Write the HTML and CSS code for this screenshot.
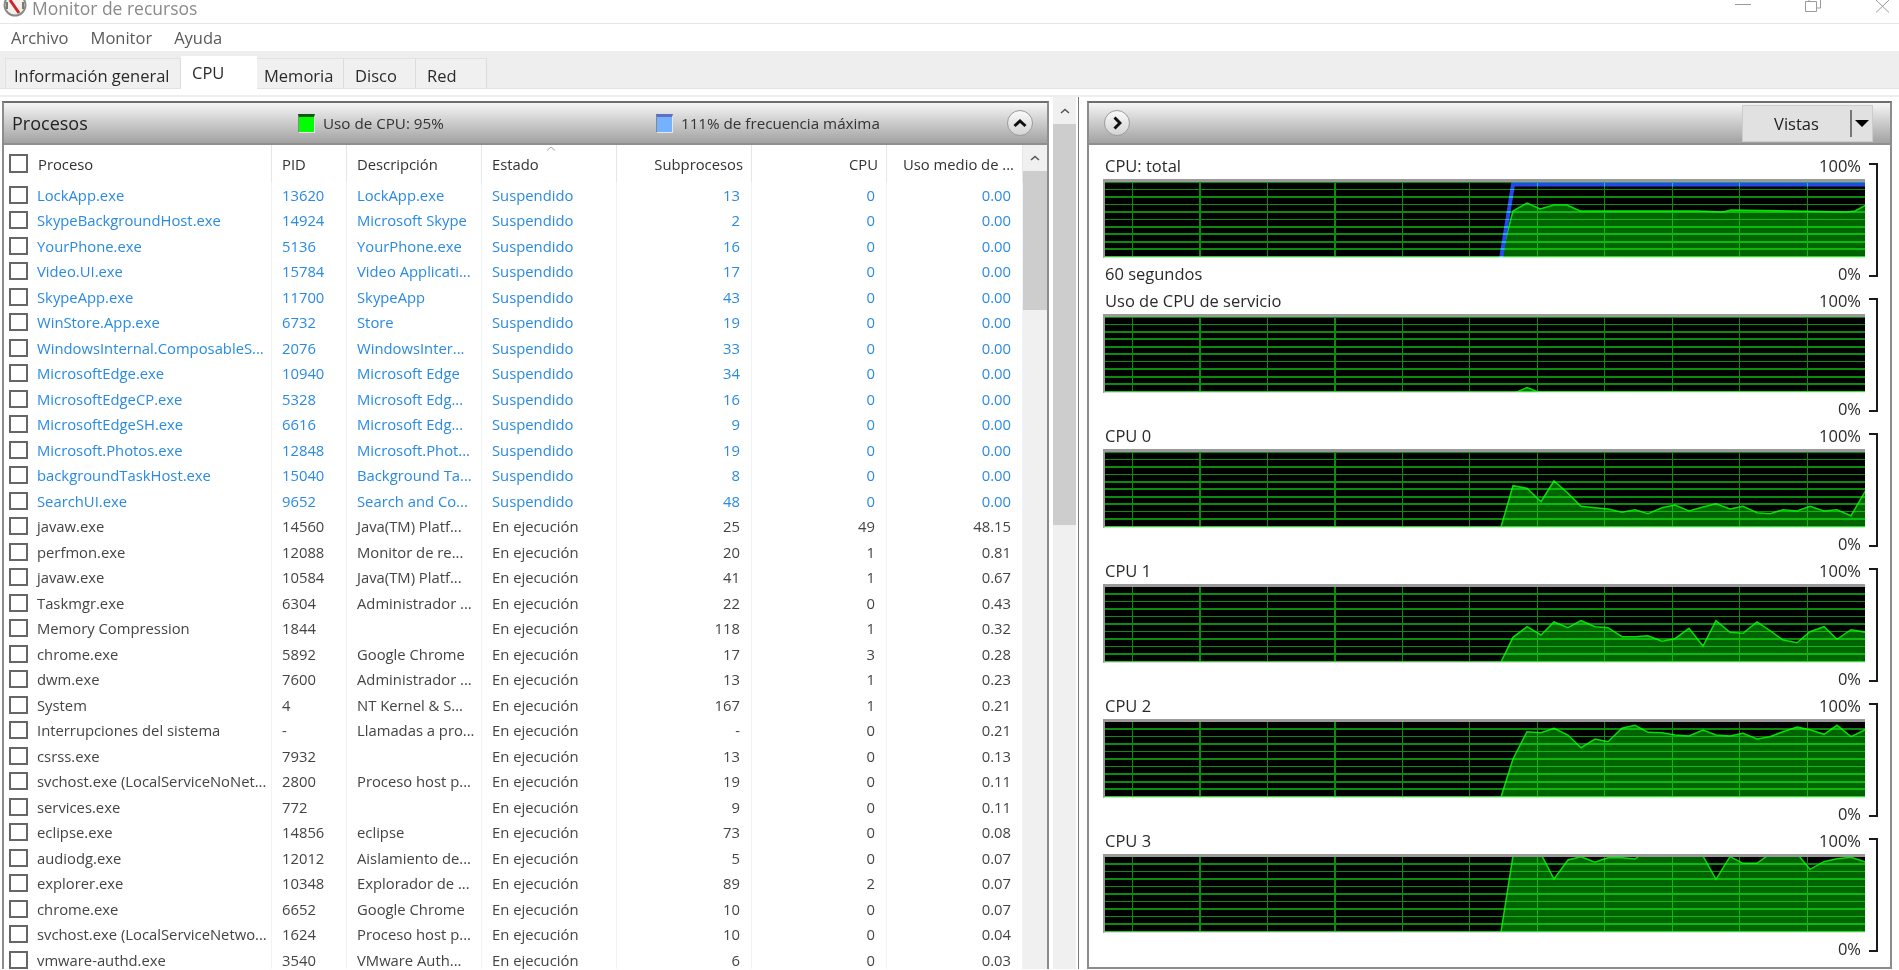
FILE: index.html
```html
<!DOCTYPE html>
<html lang="es">
<head>
    <meta charset="UTF-8">
    <title>Monitor de recursos</title>
    <link rel="stylesheet" href="styles.css">
</head>
<body>
    <!-- Title bar -->
    <div class="titlebar">
        <svg class="app-icon" width="24" height="23" viewBox="0 0 24 23">
            <circle cx="12" cy="5" r="10.5" fill="#f4f1ec" stroke="#8a8a86" stroke-width="2"/>
            <path d="M7 0l9 13" stroke="#c8282a" stroke-width="3" fill="none"/>
            <path d="M4 2v7M20 2v7" stroke="#55504c" stroke-width="1.5" fill="none"/>
        </svg>
        <span class="app-title">Monitor de recursos</span>
        <div class="win-btns">
            <svg width="16" height="13" viewBox="0 0 16 13"><path d="M0 4.5h16" stroke="#9a9a9a" fill="none"/></svg>
            <svg width="16" height="13" viewBox="0 0 16 13"><path d="M.5 1.5h11v10H.5zM4 1V-1M11.500 -1H15.500V8H12" stroke="#9a9a9a" fill="none"/></svg>
            <svg width="16" height="13" viewBox="0 0 16 13"><path d="M1 0l13 12.500M14 0L1 12.500" stroke="#9a9a9a" fill="none"/></svg>
        </div>
    </div>

    <!-- Menu -->
    <div class="menubar">
        <span>Archivo</span>
        <span>Monitor</span>
        <span>Ayuda</span>
    </div>

    <!-- Tabs -->
    <div class="tabs">
        <div class="tab tab-general">Información general</div>
        <div class="tab tab-cpu">CPU</div>
        <div class="tab tab-mem">Memoria</div>
        <div class="tab tab-disk">Disco</div>
        <div class="tab tab-net">Red</div>
    </div>
    <div class="tab-rule"></div>

    <div class="main">
        <!-- Processes -->
        <div class="panel panel-left">
            <div class="panel-head">
                <span class="panel-title">Procesos</span>
                <span class="legend legend-cpu"><i class="swatch swatch-green"></i>Uso de CPU: 95%</span>
                <span class="legend legend-freq"><i class="swatch swatch-blue"></i>111% de frecuencia máxima</span>
                <button class="round-btn collapse-btn">
                    <svg width="14" height="10" viewBox="0 0 14 10"><path d="M1.500 8L7 3l5.500 5" stroke="#111" stroke-width="3" fill="none"/></svg>
                </button>
            </div>
            <div class="list">
                <div class="list-body">
                    <div class="head">
                        <div class="cell"><i class="check"></i>Proceso</div>
                        <div class="cell">PID</div>
                        <div class="cell">Descripción</div>
                        <div class="cell sorted">Estado<svg class="sort-mark" width="10" height="5" viewBox="0 0 10 5"><path d="M1 4.500L5 1l4 3.500" stroke="#aaa" fill="none"/></svg></div>
                        <div class="cell num">Subprocesos</div>
                        <div class="cell num">CPU</div>
                        <div class="cell num">Uso medio de ...</div>
                    </div>

                    <div class="row susp"><div class="cell"><i class="check"></i>LockApp.exe</div><div class="cell">13620</div><div class="cell">LockApp.exe</div><div class="cell">Suspendido</div><div class="cell num">13</div><div class="cell num">0</div><div class="cell num">0.00</div></div>
                    <div class="row susp"><div class="cell"><i class="check"></i>SkypeBackgroundHost.exe</div><div class="cell">14924</div><div class="cell">Microsoft Skype</div><div class="cell">Suspendido</div><div class="cell num">2</div><div class="cell num">0</div><div class="cell num">0.00</div></div>
                    <div class="row susp"><div class="cell"><i class="check"></i>YourPhone.exe</div><div class="cell">5136</div><div class="cell">YourPhone.exe</div><div class="cell">Suspendido</div><div class="cell num">16</div><div class="cell num">0</div><div class="cell num">0.00</div></div>
                    <div class="row susp"><div class="cell"><i class="check"></i>Video.UI.exe</div><div class="cell">15784</div><div class="cell">Video Applicati...</div><div class="cell">Suspendido</div><div class="cell num">17</div><div class="cell num">0</div><div class="cell num">0.00</div></div>
                    <div class="row susp"><div class="cell"><i class="check"></i>SkypeApp.exe</div><div class="cell">11700</div><div class="cell">SkypeApp</div><div class="cell">Suspendido</div><div class="cell num">43</div><div class="cell num">0</div><div class="cell num">0.00</div></div>
                    <div class="row susp"><div class="cell"><i class="check"></i>WinStore.App.exe</div><div class="cell">6732</div><div class="cell">Store</div><div class="cell">Suspendido</div><div class="cell num">19</div><div class="cell num">0</div><div class="cell num">0.00</div></div>
                    <div class="row susp"><div class="cell"><i class="check"></i>WindowsInternal.ComposableS...</div><div class="cell">2076</div><div class="cell">WindowsInter...</div><div class="cell">Suspendido</div><div class="cell num">33</div><div class="cell num">0</div><div class="cell num">0.00</div></div>
                    <div class="row susp"><div class="cell"><i class="check"></i>MicrosoftEdge.exe</div><div class="cell">10940</div><div class="cell">Microsoft Edge</div><div class="cell">Suspendido</div><div class="cell num">34</div><div class="cell num">0</div><div class="cell num">0.00</div></div>
                    <div class="row susp"><div class="cell"><i class="check"></i>MicrosoftEdgeCP.exe</div><div class="cell">5328</div><div class="cell">Microsoft Edg...</div><div class="cell">Suspendido</div><div class="cell num">16</div><div class="cell num">0</div><div class="cell num">0.00</div></div>
                    <div class="row susp"><div class="cell"><i class="check"></i>MicrosoftEdgeSH.exe</div><div class="cell">6616</div><div class="cell">Microsoft Edg...</div><div class="cell">Suspendido</div><div class="cell num">9</div><div class="cell num">0</div><div class="cell num">0.00</div></div>
                    <div class="row susp"><div class="cell"><i class="check"></i>Microsoft.Photos.exe</div><div class="cell">12848</div><div class="cell">Microsoft.Phot...</div><div class="cell">Suspendido</div><div class="cell num">19</div><div class="cell num">0</div><div class="cell num">0.00</div></div>
                    <div class="row susp"><div class="cell"><i class="check"></i>backgroundTaskHost.exe</div><div class="cell">15040</div><div class="cell">Background Ta...</div><div class="cell">Suspendido</div><div class="cell num">8</div><div class="cell num">0</div><div class="cell num">0.00</div></div>
                    <div class="row susp"><div class="cell"><i class="check"></i>SearchUI.exe</div><div class="cell">9652</div><div class="cell">Search and Co...</div><div class="cell">Suspendido</div><div class="cell num">48</div><div class="cell num">0</div><div class="cell num">0.00</div></div>
                    <div class="row"><div class="cell"><i class="check"></i>javaw.exe</div><div class="cell">14560</div><div class="cell">Java(TM) Platf...</div><div class="cell">En ejecución</div><div class="cell num">25</div><div class="cell num">49</div><div class="cell num">48.15</div></div>
                    <div class="row"><div class="cell"><i class="check"></i>perfmon.exe</div><div class="cell">12088</div><div class="cell">Monitor de re...</div><div class="cell">En ejecución</div><div class="cell num">20</div><div class="cell num">1</div><div class="cell num">0.81</div></div>
                    <div class="row"><div class="cell"><i class="check"></i>javaw.exe</div><div class="cell">10584</div><div class="cell">Java(TM) Platf...</div><div class="cell">En ejecución</div><div class="cell num">41</div><div class="cell num">1</div><div class="cell num">0.67</div></div>
                    <div class="row"><div class="cell"><i class="check"></i>Taskmgr.exe</div><div class="cell">6304</div><div class="cell">Administrador ...</div><div class="cell">En ejecución</div><div class="cell num">22</div><div class="cell num">0</div><div class="cell num">0.43</div></div>
                    <div class="row"><div class="cell"><i class="check"></i>Memory Compression</div><div class="cell">1844</div><div class="cell"></div><div class="cell">En ejecución</div><div class="cell num">118</div><div class="cell num">1</div><div class="cell num">0.32</div></div>
                    <div class="row"><div class="cell"><i class="check"></i>chrome.exe</div><div class="cell">5892</div><div class="cell">Google Chrome</div><div class="cell">En ejecución</div><div class="cell num">17</div><div class="cell num">3</div><div class="cell num">0.28</div></div>
                    <div class="row"><div class="cell"><i class="check"></i>dwm.exe</div><div class="cell">7600</div><div class="cell">Administrador ...</div><div class="cell">En ejecución</div><div class="cell num">13</div><div class="cell num">1</div><div class="cell num">0.23</div></div>
                    <div class="row"><div class="cell"><i class="check"></i>System</div><div class="cell">4</div><div class="cell">NT Kernel &amp; S...</div><div class="cell">En ejecución</div><div class="cell num">167</div><div class="cell num">1</div><div class="cell num">0.21</div></div>
                    <div class="row"><div class="cell"><i class="check"></i>Interrupciones del sistema</div><div class="cell">-</div><div class="cell">Llamadas a pro...</div><div class="cell">En ejecución</div><div class="cell num">-</div><div class="cell num">0</div><div class="cell num">0.21</div></div>
                    <div class="row"><div class="cell"><i class="check"></i>csrss.exe</div><div class="cell">7932</div><div class="cell"></div><div class="cell">En ejecución</div><div class="cell num">13</div><div class="cell num">0</div><div class="cell num">0.13</div></div>
                    <div class="row"><div class="cell"><i class="check"></i>svchost.exe (LocalServiceNoNet...</div><div class="cell">2800</div><div class="cell">Proceso host p...</div><div class="cell">En ejecución</div><div class="cell num">19</div><div class="cell num">0</div><div class="cell num">0.11</div></div>
                    <div class="row"><div class="cell"><i class="check"></i>services.exe</div><div class="cell">772</div><div class="cell"></div><div class="cell">En ejecución</div><div class="cell num">9</div><div class="cell num">0</div><div class="cell num">0.11</div></div>
                    <div class="row"><div class="cell"><i class="check"></i>eclipse.exe</div><div class="cell">14856</div><div class="cell">eclipse</div><div class="cell">En ejecución</div><div class="cell num">73</div><div class="cell num">0</div><div class="cell num">0.08</div></div>
                    <div class="row"><div class="cell"><i class="check"></i>audiodg.exe</div><div class="cell">12012</div><div class="cell">Aislamiento de...</div><div class="cell">En ejecución</div><div class="cell num">5</div><div class="cell num">0</div><div class="cell num">0.07</div></div>
                    <div class="row"><div class="cell"><i class="check"></i>explorer.exe</div><div class="cell">10348</div><div class="cell">Explorador de ...</div><div class="cell">En ejecución</div><div class="cell num">89</div><div class="cell num">2</div><div class="cell num">0.07</div></div>
                    <div class="row"><div class="cell"><i class="check"></i>chrome.exe</div><div class="cell">6652</div><div class="cell">Google Chrome</div><div class="cell">En ejecución</div><div class="cell num">10</div><div class="cell num">0</div><div class="cell num">0.07</div></div>
                    <div class="row"><div class="cell"><i class="check"></i>svchost.exe (LocalServiceNetwo...</div><div class="cell">1624</div><div class="cell">Proceso host p...</div><div class="cell">En ejecución</div><div class="cell num">10</div><div class="cell num">0</div><div class="cell num">0.04</div></div>
                    <div class="row"><div class="cell"><i class="check"></i>vmware-authd.exe</div><div class="cell">3540</div><div class="cell">VMware Auth...</div><div class="cell">En ejecución</div><div class="cell num">6</div><div class="cell num">0</div><div class="cell num">0.03</div></div>
                </div>
                <div class="vscroll vscroll-inner">
                    <svg class="scroll-arrow" width="10" height="6" viewBox="0 0 10 6"><path d="M1 5l4-3.500L9 5" stroke="#555" stroke-width="1.500" fill="none"/></svg>
                    <div class="thumb"></div>
                </div>
            </div>
        </div>

        <!-- Outer scrollbar and splitter -->
        <div class="vscroll vscroll-outer">
            <svg class="scroll-arrow" width="10" height="6" viewBox="0 0 10 6"><path d="M1 5l4-3.500L9 5" stroke="#555" stroke-width="1.500" fill="none"/></svg>
            <div class="thumb"></div>
        </div>
        <div class="splitter"></div>

        <!-- Graphs -->
        <div class="panel panel-right">
            <div class="panel-head">
                <button class="round-btn">
                    <svg width="10" height="14" viewBox="0 0 10 14"><path d="M2.500 1.500L8 7l-5.500 5.500" stroke="#111" stroke-width="3" fill="none"/></svg>
                </button>
                <div class="views-btn">
                    <span class="views-label">Vistas</span>
                    <i class="views-sep"></i>
                    <i class="views-caret"></i>
                </div>
            </div>
            <div class="charts">
                <div class="chart">
                    <div class="chart-top"><span>CPU: total</span><span>100%</span></div>
                    <div class="graph">
                        <svg width="760" height="76" viewBox="0 1 760 76">
                            <polyline class="usage" points="396,76 408,30 422,22 435,28 449,24 462,24 475,30 592,30 618,31 626,29 742,31 750,30 761,24 761,78"/>
                            <polyline class="max-freq" points="396,78 408,3.500 761,3.500"/>
                        </svg>
                    </div>
                    <div class="chart-bottom"><span>60 segundos</span><span>0%</span></div>
                    <i class="bracket"></i>
                </div>
                <div class="chart">
                    <div class="chart-top"><span>Uso de CPU de servicio</span><span>100%</span></div>
                    <div class="graph">
                        <svg width="760" height="76" viewBox="0 1 760 76">
                            <polyline class="usage" points="412,76 422,71.500 433,76 761,76 761,78"/>
                        </svg>
                    </div>
                    <div class="chart-bottom"><span></span><span>0%</span></div>
                    <i class="bracket"></i>
                </div>
                <div class="chart">
                    <div class="chart-top"><span>CPU 0</span><span>100%</span></div>
                    <div class="graph">
                        <svg width="760" height="76" viewBox="0 1 760 76">
                            <polyline class="usage" points="396,76 408,34.700 422,37.300 436,50.700 449,30 463,42.300 476,55.300 490,56.700 503,58 517,61.300 530,58.700 543,62.700 557,56.700 570,54 584,60 598,56 611,52.700 625,58 638,55.300 652,61.700 665,62.700 678,58.700 692,60 705,55.300 719,60 732,58.700 746,64.700 761,39 761,78"/>
                        </svg>
                    </div>
                    <div class="chart-bottom"><span></span><span>0%</span></div>
                    <i class="bracket"></i>
                </div>
                <div class="chart">
                    <div class="chart-top"><span>CPU 1</span><span>100%</span></div>
                    <div class="graph">
                        <svg width="760" height="76" viewBox="0 1 760 76">
                            <polyline class="usage" points="396,76 408,51.300 422,40.700 436,49 449,36 463,41.700 476,34.700 490,40.700 503,41.700 517,50.700 530,50.700 543,49.700 557,55.300 570,52.700 584,42.300 598,60 611,34.700 625,46.300 638,47.300 652,36 665,44.700 678,54 692,56.700 705,45.700 719,40.700 732,53.300 746,43.700 761,46.300 761,78"/>
                        </svg>
                    </div>
                    <div class="chart-bottom"><span></span><span>0%</span></div>
                    <i class="bracket"></i>
                </div>
                <div class="chart">
                    <div class="chart-top"><span>CPU 2</span><span>100%</span></div>
                    <div class="graph">
                        <svg width="760" height="76" viewBox="0 1 760 76">
                            <polyline class="usage" points="396,76 408,38 422,10.700 436,11.700 449,7.300 463,14 476,26.700 490,18 503,20.700 517,7.300 530,4.300 543,11.300 557,11.700 570,14 584,15 598,9 611,14 625,15 638,12.300 652,18 665,15.700 678,10.700 692,6 705,8.700 719,13.300 732,4.300 746,15.700 761,8.300 761,78"/>
                        </svg>
                    </div>
                    <div class="chart-bottom"><span></span><span>0%</span></div>
                    <i class="bracket"></i>
                </div>
                <div class="chart">
                    <div class="chart-top"><span>CPU 3</span><span>100%</span></div>
                    <div class="graph">
                        <svg width="760" height="76" viewBox="0 1 760 76">
                            <polyline class="usage" points="396,76 408,0 437,0 449,23 463,4 476,0.700 490,6.300 503,1.700 517,1.700 530,3 534,0 598,0 611,23.300 625,0.700 638,7.300 652,7.300 662,0 694,0 705,13.300 719,5.700 732,2.700 746,1.300 761,6 761,78"/>
                        </svg>
                    </div>
                    <div class="chart-bottom"><span></span><span>0%</span></div>
                    <i class="bracket"></i>
                </div>
            </div>
        </div>
    </div>
</body>
</html>
```

FILE: styles.css
```css
html, body {
    margin: 0;
    height: 970px;
    overflow: hidden;
    background-color: white;
}

body {
    font-family: "Open Sans", "Noto Sans", sans-serif;
    font-size: 14.8px;
    color: #3a3a3a;
}

i {
    display: block;
}

/* Title bar */
.titlebar {
    display: flex;
    height: 23px;
    overflow: hidden;
    border-bottom: 1px solid #e6e6e6;
}

.app-icon {
    margin-left: 3px;
}

.app-title {
    margin-left: 5px;
    font-size: 17.5px;
    line-height: 16px;
    color: #8a8a8a;
}

.win-btns {
    display: flex;
    gap: 54px;
    margin-left: auto;
    margin-right: 8px;
}

.win-btns svg {
    overflow: visible;
}

/* Menu */
.menubar {
    display: flex;
    align-items: center;
    gap: 22px;
    height: 27px;
    padding-left: 11px;
    font-size: 16.5px;
    color: #5a5a5a;
}

/* Tabs */
.tabs {
    display: flex;
    align-items: flex-end;
    height: 38px;
    padding-left: 5px;
    background-color: #eeeeee;
    border-bottom: 1px solid #e2e2e2;
    box-sizing: border-box;
    font-size: 16.5px;
}

.tab {
    box-sizing: border-box;
    height: 30px;
    line-height: 34px;
    border-top: 1px solid #e2e2e2;
    border-right: 1px solid #dcdcdc;
    background-color: #f0f0f0;
    color: #2a2a2a;
}

.tab-general { width: 176px; padding-left: 8px; border-left: 1px solid #e2e2e2; }
.tab-mem { width: 87px; padding-left: 7px; }
.tab-disk { width: 72px; padding-left: 11px; }
.tab-net { width: 71px; padding-left: 11px; }

.tab-cpu {
    width: 76px;
    height: 33px;
    margin-bottom: -1px;
    padding-left: 11px;
    line-height: 34px;
    border: none;
    background-color: white;
    position: relative;
}

.tab-rule {
    height: 2px;
    margin-top: 6px;
    background-color: #eeeeee;
}

/* Main area */
.main {
    display: flex;
    height: 872px;
}

.panel {
    box-sizing: border-box;
    margin-top: 4px;
    border: 2px solid #8c8c8c;
    border-top-color: #6e6e6e;
    background-color: white;
}

.panel-left {
    width: 1047px;
    margin-left: 2px;
    border-bottom: none;
    overflow: hidden;
    flex-shrink: 0;
}

.panel-right {
    width: 805px;
    height: 868px;
    margin-left: 8px;
    flex-shrink: 0;
}

.panel-head {
    display: flex;
    align-items: center;
    box-sizing: border-box;
    height: 42px;
    border-bottom: 2px solid #8f8f8f;
    background: linear-gradient(#f6f6f6, #e0e0e0 25%, #a2a2a2);
    color: #222222;
}

.panel-title {
    width: 294px;
    padding-left: 8px;
    box-sizing: border-box;
    font-size: 18px;
}

.legend {
    display: flex;
    align-items: center;
    box-sizing: border-box;
    font-size: 15.2px;
    color: #333333;
}

.legend-cpu { width: 358px; }

.swatch {
    box-sizing: border-box;
    width: 17px;
    height: 19px;
    margin-right: 8px;
    border-left: 1px solid #888888;
    border-right: 1px solid #e6e6e6;
    border-bottom: 1px solid #e6e6e6;
}

.swatch-green {
    background-color: #00ff00;
    border-top: 3px solid #0a5a0a;
}

.swatch-blue {
    background-color: #74b2ff;
    border-top: 3px solid #5c6fc0;
}

.round-btn {
    display: flex;
    align-items: center;
    justify-content: center;
    box-sizing: border-box;
    width: 26px;
    height: 26px;
    padding: 0;
    border: 1px solid #9c9c9c;
    border-radius: 50%;
    background: linear-gradient(#fafafa, #d4d4d4);
}

.collapse-btn {
    margin-left: auto;
    margin-right: 14px;
}

.panel-right .round-btn {
    margin-left: 15px;
}

.views-btn {
    display: flex;
    align-items: center;
    box-sizing: border-box;
    width: 131px;
    height: 37px;
    margin-left: auto;
    margin-right: 17px;
    border: 1px solid #cccccc;
    background-color: #e1e1e1;
    font-size: 16.5px;
}

.views-label {
    width: 107px;
    text-align: center;
    color: #222222;
}

.views-sep {
    width: 2px;
    height: 27px;
    background-color: #777777;
}

.views-caret {
    margin-left: 3px;
    border-left: 7px solid transparent;
    border-right: 7px solid transparent;
    border-top: 7px solid black;
}

/* Process list */
.list {
    display: flex;
}

.list-body {
    width: 1019px;
}

.head, .row {
    display: grid;
    grid-template-columns: 268px 75px repeat(4, 135px) 136px;
}

.head {
    height: 37px;
    color: #333333;
}

.row {
    height: 25.5px;
    color: #444444;
}

.susp {
    color: #2a8ae2;
}

.cell {
    display: flex;
    align-items: center;
    box-sizing: border-box;
    padding-left: 10px;
    white-space: nowrap;
    overflow: hidden;
    border-right: 1px solid #eef3f8;
}

.head .cell {
    border-right-color: #e6e6e6;
}

.head .cell:first-child, .row .cell:first-child {
    padding-left: 5px;
}

.num {
    justify-content: flex-end;
    padding-left: 0;
    padding-right: 11px;
}

.head .num {
    padding-right: 8px;
}

.check {
    flex-shrink: 0;
    box-sizing: border-box;
    width: 19px;
    height: 18px;
    margin-right: 9px;
    border: 2px solid #666666;
    background-color: white;
}

.head .check {
    margin-right: 10px;
    height: 19px;
}

.sorted {
    position: relative;
}

.sort-mark {
    position: absolute;
    left: 64px;
    top: 1px;
}

/* Scrollbars */
.vscroll {
    display: flex;
    flex-direction: column;
    flex-shrink: 0;
    background-color: #f0f0f0;
}

.scroll-arrow {
    align-self: center;
}

.vscroll-inner {
    width: 24px;
}

.vscroll-inner .scroll-arrow {
    margin-top: 10px;
}

.vscroll-inner .thumb {
    height: 139px;
    margin-top: 10px;
    background-color: #cdcdcd;
}

.vscroll-outer {
    width: 23px;
    margin-left: 4px;
}

.vscroll-outer .scroll-arrow {
    margin-top: 11px;
}

.vscroll-outer .thumb {
    height: 401px;
    margin-top: 10px;
    background-color: #cdcdcd;
}

.splitter {
    width: 1px;
    margin-left: 2px;
    background-color: #777777;
    flex-shrink: 0;
}

/* Graphs */
.charts {
    padding: 11px 0 0 14px;
}

.chart {
    position: relative;
    width: 762px;
    height: 135px;
}

.chart-top, .chart-bottom {
    display: flex;
    justify-content: space-between;
    padding: 0 4px 0 2px;
    font-size: 16.5px;
    color: #2a2a2a;
}

.chart-top {
    height: 23px;
    line-height: 19px;
}

.chart-bottom {
    height: 33px;
    line-height: 31px;
}

.graph {
    box-sizing: border-box;
    width: 762px;
    height: 79px;
    border-top: 3px solid #9a9a9a;
    border-left: 2px solid #9a9a9a;
    border-bottom: 1px solid #dddddd;
    background-color: black;
    background-image:
        linear-gradient(to top, #1fd81f 1px, transparent 1px),
        repeating-linear-gradient(90deg, transparent 0 26.5px, #0c8c0c 26.5px 28px, transparent 28px 67.5px),
        repeating-linear-gradient(180deg, #0c8c0c 0 .5px, transparent .5px 6.5px, #0c8c0c 6.5px 7.5px);
}

.graph svg {
    display: block;
    mix-blend-mode: screen;
}

.usage {
    fill: #006400;
    stroke: #00e000;
    stroke-width: 1.5;
}

.max-freq {
    fill: none;
    stroke: #2448ee;
    stroke-width: 4;
}

/* Scale bracket next to each graph */
.bracket {
    position: absolute;
    left: 766px;
    top: 7px;
    box-sizing: border-box;
    width: 9px;
    height: 114px;
    border: 2px solid #1a1a1a;
    border-left: none;
}
```
